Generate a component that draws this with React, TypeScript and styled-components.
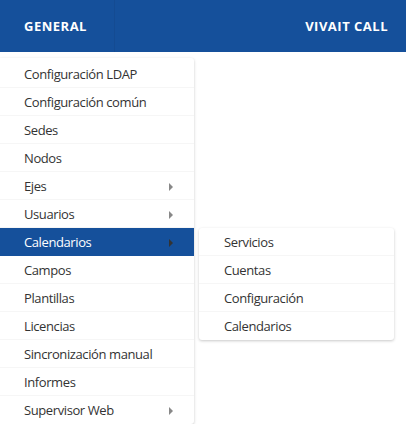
import { createGlobalStyle, styled } from 'styled-components';

const GlobalStyle = createGlobalStyle`
    body {
        margin: 0;
        background: #ffffff;
        font-family: 'Open Sans', 'Noto Sans', sans-serif;
    }
`;

const Header = styled.header`
    display: flex;
    justify-content: space-between;
    align-items: stretch;
    height: 52px;
    background: #15509b;
    color: #ffffff;
`;

const HeaderItem = styled.div<{ $divider?: boolean }>`
    display: flex;
    align-items: center;
    padding: 0 18px 0 24px;
    width: ${(p) => (p.$divider ? '115px' : 'auto')};
    box-sizing: border-box;
    border-right: ${(p) => (p.$divider ? '1px solid #144b92' : 'none')};
    font-size: 13px;
    font-weight: 700;
    letter-spacing: 0.5px;
`;

const Dropdown = styled.nav`
    position: relative;
    width: 194px;
    margin-top: 6px;
    padding-top: 2px;
    background: #ffffff;
    border-radius: 0 3px 3px 0;
    box-shadow: 0 1px 3px rgba(0, 0, 0, 0.22);
`;

const List = styled.ul`
    list-style: none;
    margin: 0;
    padding: 0;
`;

const Item = styled.li<{ $active?: boolean }>`
    position: relative;
    display: flex;
    align-items: center;
    height: 28px;
    padding-left: 24px;
    box-sizing: border-box;
    font-size: 13px;
    letter-spacing: -0.4px;
    color: ${(p) => (p.$active ? '#ffffff' : '#333333')};
    background: ${(p) => (p.$active ? '#15509b' : 'transparent')};
    border-bottom: 1px solid ${(p) => (p.$active ? '#15509b' : '#f6f6f6')};

    &:last-child {
        border-bottom: none;
    }
`;

const Arrow = styled.span<{ $active?: boolean }>`
    position: absolute;
    left: 169px;
    top: 50%;
    margin-top: -3px;
    width: 0;
    height: 0;
    border-top: 4px solid transparent;
    border-bottom: 4px solid transparent;
    border-left: 4px solid ${(p) => (p.$active ? '#333333' : '#888888')};
`;

const Submenu = styled.ul`
    position: absolute;
    left: 199px;
    top: 0;
    width: 195px;
    list-style: none;
    margin: 0;
    padding: 0;
    background: #ffffff;
    border-radius: 3px;
    box-shadow: 0 1px 3px rgba(0, 0, 0, 0.22);
`;

const SubItem = styled.li`
    display: flex;
    align-items: center;
    height: 28px;
    padding-left: 25px;
    box-sizing: border-box;
    font-size: 13px;
    letter-spacing: -0.4px;
    color: #333333;
    border-bottom: 1px solid #f6f6f6;

    &:last-child {
        border-bottom: none;
    }
`;

const entries = [
    { label: 'Configuración LDAP' },
    { label: 'Configuración común' },
    { label: 'Sedes' },
    { label: 'Nodos' },
    { label: 'Ejes', sub: true },
    { label: 'Usuarios', sub: true },
    { label: 'Calendarios', sub: true, active: true },
    { label: 'Campos' },
    { label: 'Plantillas' },
    { label: 'Licencias' },
    { label: 'Sincronización manual' },
    { label: 'Informes' },
    { label: 'Supervisor Web', sub: true },
];

const calendarItems = ['Servicios', 'Cuentas', 'Configuración', 'Calendarios'];

const App = () => {
    return (
        <>
            <GlobalStyle />
            <Header>
                <HeaderItem $divider>GENERAL</HeaderItem>
                <HeaderItem>VIVAIT CALL</HeaderItem>
            </Header>
            <Dropdown>
                <List>
                    {entries.map((entry, index) => (
                        <Item key={index} $active={entry.active}>
                            {entry.label}
                            {entry.sub && <Arrow $active={entry.active} />}
                            {entry.active && (
                                <Submenu>
                                    {calendarItems.map((label, subIndex) => (
                                        <SubItem key={subIndex}>{label}</SubItem>
                                    ))}
                                </Submenu>
                            )}
                        </Item>
                    ))}
                </List>
            </Dropdown>
        </>
    );
};

export default App;
